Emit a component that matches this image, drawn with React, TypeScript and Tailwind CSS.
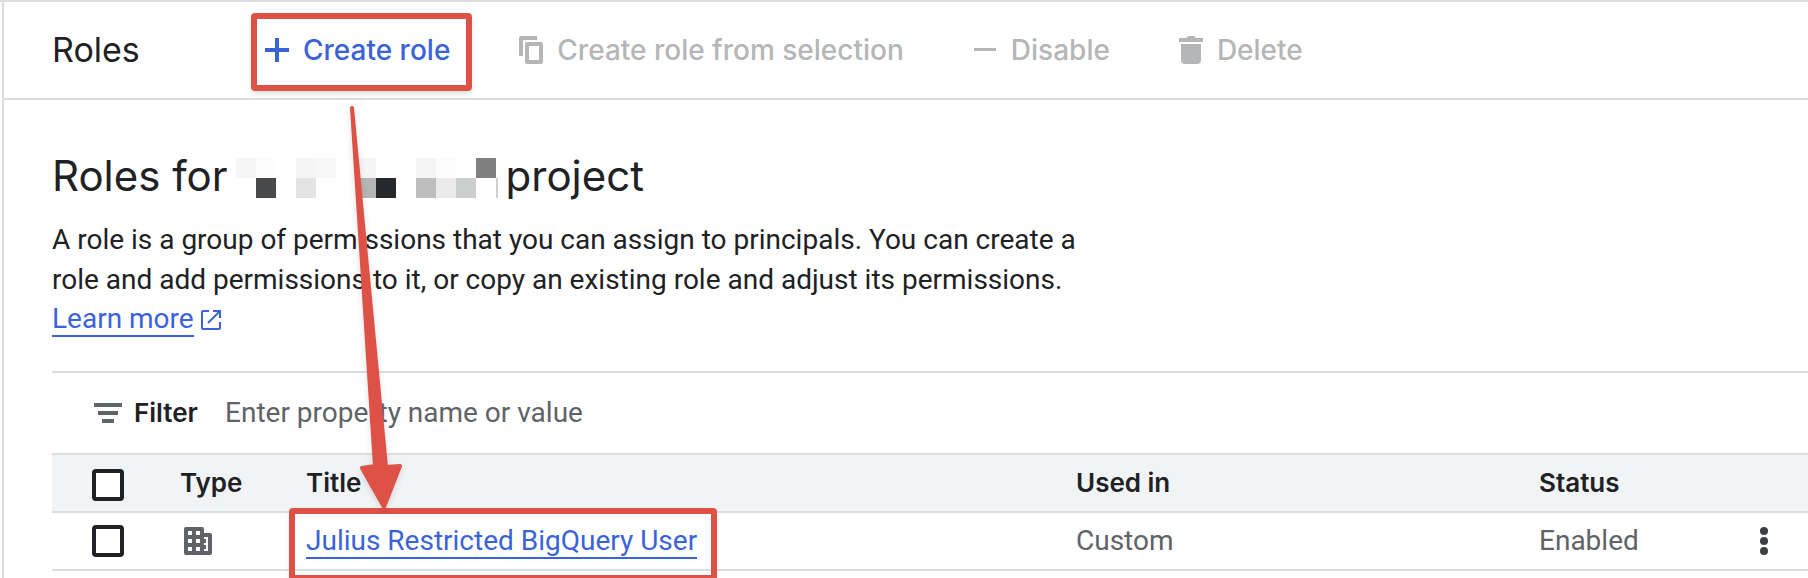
import React from 'react';

interface Role {
  title: string;
  usedIn: string;
  status: string;
}

const roles: Role[] = [
  { title: 'Julius Restricted BigQuery User', usedIn: 'Custom', status: 'Enabled' },
];

// redacted project name, one entry per 20px block
const blocks = [
  { x: 0, y: 0, fill: '#f6f6f6' },
  { x: 20, y: 0, fill: '#fcfcfc' },
  { x: 20, y: 20, fill: '#48494b' },
  { x: 60, y: 0, fill: '#f5f5f5' },
  { x: 80, y: 0, fill: '#f8f8f8' },
  { x: 60, y: 20, fill: '#e4e4e4' },
  { x: 120, y: 0, fill: '#f5f5f5' },
  { x: 120, y: 20, fill: '#b5b5b5' },
  { x: 140, y: 20, fill: '#27282c' },
  { x: 180, y: 0, fill: '#f5f5f5' },
  { x: 200, y: 0, fill: '#fcfcfc' },
  { x: 220, y: 0, fill: '#fefefe' },
  { x: 240, y: 0, fill: '#7f7f7f' },
  { x: 180, y: 20, fill: '#bdbdbd' },
  { x: 200, y: 20, fill: '#eaeaea' },
  { x: 220, y: 20, fill: '#cdcfce' },
];

function AddIcon() {
  return (
    <svg width="36" height="36" viewBox="0 0 36 36" fill="currentColor" aria-hidden="true">
      <path d="M16 6h4v10h10v4H20v10h-4V20H6v-4h10z" />
    </svg>
  );
}

function CopyIcon() {
  return (
    <svg width="36" height="36" viewBox="0 0 36 36" fill="currentColor" aria-hidden="true">
      <path d="M6 24V6a2 2 0 0 1 2-2h16v4H10v16z" />
      <path fillRule="evenodd" d="M14 10h14a2 2 0 0 1 2 2v18a2 2 0 0 1-2 2H14a2 2 0 0 1-2-2V12a2 2 0 0 1 2-2zm2 4v14h10V14z" />
    </svg>
  );
}

function RemoveIcon() {
  return (
    <svg width="36" height="36" viewBox="0 0 36 36" fill="currentColor" aria-hidden="true">
      <path d="M7 16h22v3H7z" />
    </svg>
  );
}

function DeleteIcon() {
  return (
    <svg width="36" height="36" viewBox="0 0 36 36" fill="currentColor" aria-hidden="true">
      <path d="M13 6l2-2h6l2 2h7v4H6V6z" />
      <path d="M8 12h20v16a4 4 0 0 1-4 4H12a4 4 0 0 1-4-4z" />
    </svg>
  );
}

function OpenInNewIcon() {
  return (
    <svg width="20" height="20" viewBox="0 0 20 20" fill="none" stroke="currentColor" strokeWidth="2" aria-hidden="true">
      <path d="M8 1H2a1 1 0 0 0-1 1v16a1 1 0 0 0 1 1h16a1 1 0 0 0 1-1v-6M12 1h7v7M19 1L7 13" />
    </svg>
  );
}

function FilterIcon() {
  return (
    <svg width="28" height="20" viewBox="0 0 28 20" fill="#5f6368" aria-hidden="true">
      <path d="M0 0h28v4H0zM4 8h20v4H4zM8 16h12v4H8z" />
    </svg>
  );
}

function DomainIcon() {
  return (
    <svg width="28" height="28" viewBox="0 0 28 28" fill="#5f6368" fillRule="evenodd" role="img" aria-label="Custom role">
      <path d="M2 0h16a2 2 0 0 1 2 2v4h6a2 2 0 0 1 2 2v18a2 2 0 0 1-2 2H2a2 2 0 0 1-2-2V2a2 2 0 0 1 2-2zM4 4v4h4V4zM12 4v4h4V4zM4 12v4h4v-4zM12 12v4h4v-4zM4 20v4h4v-4zM12 20v4h4v-4zM20 10v2h2v4h-2v2h2v4h-2v2h4V10z" />
    </svg>
  );
}

function MoreIcon() {
  return (
    <svg width="8" height="28" viewBox="0 0 8 28" fill="#3c4043" aria-hidden="true">
      <circle cx="4" cy="4" r="4" />
      <circle cx="4" cy="14" r="4" />
      <circle cx="4" cy="24" r="4" />
    </svg>
  );
}

interface ToolbarButtonProps {
  icon: React.ReactNode;
  label: string;
  disabled?: boolean;
  highlighted?: boolean;
}

function ToolbarButton({ icon, label, disabled, highlighted }: ToolbarButtonProps) {
  return (
    <button
      type="button"
      disabled={disabled}
      className="relative flex items-center gap-2 text-[28px] leading-9 font-medium whitespace-nowrap text-[#3b63d9] disabled:text-[#b5b6b8]"
    >
      {icon}
      {label}
      {highlighted && (
        <span className="absolute -top-[19px] -right-[22px] -bottom-[23px] -left-2 rounded-sm border-6 border-[#dd5147] shadow-md" />
      )}
    </button>
  );
}

function RoleCheckbox({ label }: { label: string }) {
  return (
    <input
      type="checkbox"
      aria-label={label}
      className="block size-8 appearance-none rounded-sm border-4 border-[#202124] bg-white"
    />
  );
}

export default function App() {
  return (
    <div className="relative h-screen overflow-hidden border-t-2 border-[#dcdce1] bg-white font-['Roboto',sans-serif] text-[28px] leading-10 text-[#202124]">
      <div className="ml-[2px] h-full border-l-2 border-[#dcdce1]">
        <header className="flex h-[98px] items-center border-b-2 border-[#dcdce1] pl-12 font-['Inter',sans-serif]">
          <h2 className="w-[207px] shrink-0 text-[34px]">Roles</h2>
          <div className="flex gap-[63px]">
            <ToolbarButton icon={<AddIcon />} label="Create role" highlighted />
            <ToolbarButton icon={<CopyIcon />} label="Create role from selection" disabled />
            <ToolbarButton icon={<RemoveIcon />} label="Disable" disabled />
            <ToolbarButton icon={<DeleteIcon />} label="Delete" disabled />
          </div>
        </header>

        <main className="pt-12 pl-12">
          <h1 className="flex items-center font-['Inter',sans-serif] text-[42px] leading-[56px]">
            Roles for
            <svg width="262" height="40" viewBox="0 0 262 40" className="mt-1 mr-2 ml-2" shapeRendering="crispEdges" aria-hidden="true">
              {blocks.map((block) => (
                <rect key={`${block.x}-${block.y}`} x={block.x} y={block.y} width="20" height="20" fill={block.fill} />
              ))}
              <rect x="260" y="20" width="2" height="20" fill="#cfcfcf" />
            </svg>
            project
          </h1>

          <p className="mt-4 max-w-[1060px]">
            A role is a group of permissions that you can assign to principals. You can create a role and add
            permissions to it, or copy an existing role and adjust its permissions.
          </p>
          <a href="#learn-more" className="flex h-10 w-fit items-center gap-[7px] text-[#3b63d9]">
            <span className="border-b-2 border-current leading-8">Learn more</span>
            <OpenInNewIcon />
          </a>

          <div className="mt-[31px] flex h-[82px] items-center border-t-2 border-[#dcdce1] pl-[42px]">
            <FilterIcon />
            <label htmlFor="filter" className="ml-3 w-[91px] font-['Inter',sans-serif] text-[26px] font-semibold">
              Filter
            </label>
            <input
              id="filter"
              type="text"
              placeholder="Enter property name or value"
              className="flex-1 outline-none placeholder:text-[#5f6368]"
            />
          </div>

          <table className="w-full table-fixed text-left">
            <thead>
              <tr className="h-[58px] border-y-2 border-[#dcdce1] bg-[#f1f3f4] font-['Inter',sans-serif] text-[26px]">
                <th className="w-32 pt-1 pl-10">
                  <RoleCheckbox label="Select all roles" />
                </th>
                <th className="w-[126px] font-semibold">Type</th>
                <th className="font-semibold">Title</th>
                <th className="w-[463px] font-semibold">Used in</th>
                <th className="w-[217px] font-semibold">Status</th>
                <th className="w-[52px]" />
              </tr>
            </thead>
            <tbody>
              {roles.map((role) => (
                <tr key={role.title} className="h-[58px] border-b-2 border-[#dcdce1] text-[#5f6368]">
                  <td className="pl-10">
                    <RoleCheckbox label={`Select ${role.title}`} />
                  </td>
                  <td className="pl-1">
                    <DomainIcon />
                  </td>
                  <td className="pt-0.5">
                    <a href="#role" className="relative block w-fit border-b-2 border-current leading-8 text-[#3b63d9]">
                      {role.title}
                      <span className="absolute -top-[17px] -right-5 -bottom-6 -left-[17px] rounded-sm border-6 border-[#dd5147] shadow-md" />
                    </a>
                  </td>
                  <td>{role.usedIn}</td>
                  <td>{role.status}</td>
                  <td>
                    <button type="button" aria-label="More actions" className="ml-1 block">
                      <MoreIcon />
                    </button>
                  </td>
                </tr>
              ))}
            </tbody>
          </table>
        </main>
      </div>

      {/* arrow from the create button down to the new role */}
      <svg
        width="60"
        height="410"
        viewBox="0 0 60 410"
        className="pointer-events-none absolute top-[103px] left-[347px] drop-shadow-md"
        fill="#dd5147"
        stroke="#dd5147"
        strokeLinejoin="round"
        aria-hidden="true"
      >
        <path strokeWidth="4" d="M5 3L28 361L15 363L37 402L53 361L39 362Z" />
      </svg>
    </div>
  );
}
